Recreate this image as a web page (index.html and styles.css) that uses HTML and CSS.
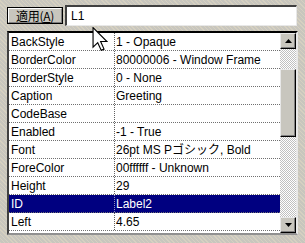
FILE: index.html
```html
<!DOCTYPE html>
<html>
<head>
<meta charset="utf-8">
<link rel="stylesheet" href="styles.css">
</head>
<body>
<div class="dialog">
  <div class="toolbar">
    <button class="apply"><span class="btn-face">適用(<u>A</u>)</span></button>
    <div class="input">L1</div>
  </div>
  <div class="grid">
    <div class="rows">
      <div class="row"><div class="name">BackStyle</div><div class="value">1 - Opaque</div></div>
      <div class="row"><div class="name">BorderColor</div><div class="value">80000006 - Window Frame</div></div>
      <div class="row"><div class="name">BorderStyle</div><div class="value">0 - None</div></div>
      <div class="row"><div class="name">Caption</div><div class="value">Greeting</div></div>
      <div class="row"><div class="name">CodeBase</div><div class="value"></div></div>
      <div class="row"><div class="name">Enabled</div><div class="value">-1 - True</div></div>
      <div class="row"><div class="name">Font</div><div class="value">26pt MS Pゴシック, Bold</div></div>
      <div class="row"><div class="name">ForeColor</div><div class="value">00ffffff - Unknown</div></div>
      <div class="row"><div class="name">Height</div><div class="value">29</div></div>
      <div class="row selected"><div class="name">ID</div><div class="value">Label2</div></div>
      <div class="row"><div class="name">Left</div><div class="value">4.65</div></div>
    </div>
    <div class="scrollbar">
      <div class="sb-btn"><svg width="7" height="4" viewBox="0 0 7 4"><path d="M3.5 0 L7 4 L0 4 Z" fill="#000"/></svg></div>
      <div class="track">
        <div class="gap-top"></div>
        <div class="thumb"></div>
      </div>
      <div class="sb-btn"><svg width="7" height="4" viewBox="0 0 7 4"><path d="M0 0 L7 0 L3.5 4 Z" fill="#000"/></svg></div>
    </div>
  </div>
  <svg class="cursor" width="16" height="24" viewBox="0 0 12 19">
    <path d="M0.5 0.5 L0.5 16 L4.2 12.4 L7 18.5 L9.2 17.5 L6.5 11.5 L11.5 11.5 Z" fill="#fff" stroke="#000" stroke-width="0.9" stroke-linejoin="miter"/>
  </svg>
</div>
</body>
</html>
```
FILE: styles.css
```css
html, body {
  margin: 0;
  padding: 0;
}
body {
  background: #c8c6be;
  font-family: "Liberation Sans", Arial, "Noto Sans CJK JP", sans-serif;
  font-size: 12px;
  color: #000;
}
.dialog {
  position: relative;
  width: 305px;
  height: 243px;
  overflow: hidden;
  background-color: #c8c6be;
  background-image: repeating-linear-gradient(45deg, rgba(255,240,200,0.25) 0 1px, transparent 1px 3px);
}
.toolbar {
  display: flex;
  align-items: flex-start;
  padding: 5px 8px 0 7px;
  gap: 2px;
  height: 26px;
  box-sizing: border-box;
}
.apply {
  margin: 2px 0 0 0;
  width: 56px;
  height: 17px;
  padding: 0;
  border: 1px solid #000;
  background: #c8c6be;
  font: inherit;
  font-family: "Noto Sans CJK JP", "Liberation Sans", sans-serif;
  font-size: 12px;
  color: #000;
  display: flex;
}
.btn-face {
  flex: 1;
  display: flex;
  align-items: center;
  justify-content: center;
  border-top: 1px solid #fff;
  border-left: 1px solid #fff;
  border-right: 1px solid #808080;
  border-bottom: 1px solid #808080;
  line-height: 13px;
  white-space: nowrap;
  letter-spacing: -0.3px;
}
.btn-face u {
  text-decoration-thickness: 1px;
  text-underline-offset: 1px;
}
.input {
  flex: 1;
  height: 21px;
  box-sizing: border-box;
  background: #fff;
  border-top: 2px solid #404040;
  border-left: 2px solid #404040;
  border-right: 1px solid #e8e8e8;
  border-bottom: 1px solid #e8e8e8;
  padding: 2px 4px;
  line-height: 15px;
}
.grid {
  display: flex;
  margin: 5px 7px 0 7px;
  height: 204px;
  box-sizing: border-box;
  border-top: 2px solid #000;
  border-left: 2px solid #404040;
  border-right: 2px solid #e8e8e8;
  border-bottom: 2px solid #909090;
  background: #fff;
}
.rows {
  flex: 1;
  display: flex;
  flex-direction: column;
}
.row {
  display: flex;
  height: 18px;
  box-sizing: border-box;
  border-bottom: 1px dotted #707070;
  line-height: 18px;
  white-space: nowrap;
  overflow: hidden;
}
.name {
  width: 106px;
  box-sizing: border-box;
  padding-left: 2px;
  border-right: 1px dotted #606060;
}
.value {
  flex: 1;
  padding-left: 1px;
  overflow: hidden;
}
.selected {
  background: #000080;
  color: #fff;
}
.selected .name {
  border-right-color: #9090c0;
}
.scrollbar {
  width: 16px;
  display: flex;
  flex-direction: column;
}
.sb-btn {
  height: 16px;
  box-sizing: border-box;
  background: #c8c6be;
  border-top: 1px solid #e8e8e8;
  border-left: 1px solid #e8e8e8;
  border-right: 1px solid #000;
  border-bottom: 1px solid #000;
  box-shadow: inset -1px -1px 0 #808080;
  display: flex;
  align-items: center;
  justify-content: center;
}
.track {
  flex: 1;
  display: flex;
  flex-direction: column;
  background-color: #fff;
  background-image: linear-gradient(45deg, #c0c0c0 25%, transparent 25%, transparent 75%, #c0c0c0 75%), linear-gradient(45deg, #c0c0c0 25%, transparent 25%, transparent 75%, #c0c0c0 75%);
  background-size: 2px 2px;
  background-position: 0 0, 1px 1px;
}
.gap-top {
  height: 20px;
}
.thumb {
  height: 68px;
  box-sizing: border-box;
  background: #c8c6be;
  border-top: 1px solid #e8e8e8;
  border-left: 1px solid #e8e8e8;
  border-right: 1px solid #000;
  border-bottom: 1px solid #000;
  box-shadow: inset -1px -1px 0 #808080;
}
.cursor {
  position: absolute;
  left: 92px;
  top: 27px;
}
```
